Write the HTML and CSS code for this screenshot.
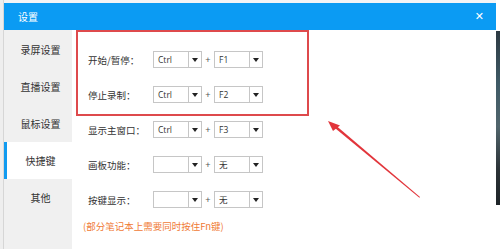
FILE: index.html
```html
<!DOCTYPE html>
<html lang="zh">
<head>
<meta charset="utf-8">
<link rel="stylesheet" href="styles.css">
</head>
<body>
<div class="desk">
  <div class="edge-left"></div>
  <div class="dialog">
    <div class="titlebar">
      <span class="title">设置</span>
      <span class="close">✕</span>
    </div>
    <div class="dlg-body">
      <nav class="sidebar">
        <div class="nav-item">录屏设置</div>
        <div class="nav-item">直播设置</div>
        <div class="nav-item">鼠标设置</div>
        <div class="nav-item active">快捷键</div>
        <div class="nav-item">其他</div>
      </nav>
      <main class="content">
        <div class="row">
          <span class="label">开始/暂停：</span>
          <div class="select"><span class="val">Ctrl</span><span class="drop"></span></div>
          <span class="plus">+</span>
          <div class="select"><span class="val">F1</span><span class="drop"></span></div>
        </div>
        <div class="row">
          <span class="label">停止录制：</span>
          <div class="select"><span class="val">Ctrl</span><span class="drop"></span></div>
          <span class="plus">+</span>
          <div class="select"><span class="val">F2</span><span class="drop"></span></div>
        </div>
        <div class="row">
          <span class="label">显示主窗口：</span>
          <div class="select"><span class="val">Ctrl</span><span class="drop"></span></div>
          <span class="plus">+</span>
          <div class="select"><span class="val">F3</span><span class="drop"></span></div>
        </div>
        <div class="row">
          <span class="label">画板功能：</span>
          <div class="select"><span class="val"></span><span class="drop"></span></div>
          <span class="plus">+</span>
          <div class="select"><span class="val cjk">无</span><span class="drop"></span></div>
        </div>
        <div class="row">
          <span class="label">按键显示：</span>
          <div class="select"><span class="val"></span><span class="drop"></span></div>
          <span class="plus">+</span>
          <div class="select"><span class="val cjk">无</span><span class="drop"></span></div>
        </div>
        <p class="note">(部分笔记本上需要同时按住Fn键)</p>
      </main>
    </div>
  </div>
  <div class="edge-right"><div class="photo"></div></div>
</div>
<div class="highlight"></div>
<svg class="arrow" width="500" height="249" viewBox="0 0 500 249">
  <polygon points="420,197 419.4,197.8 334,127.2 335.6,125.2" fill="#e2353b"/>
  <polygon points="328,121 340,125.5 333,131" fill="#e2353b"/>
</svg>
</body>
</html>
```
FILE: styles.css
```css
* { box-sizing: border-box; }
html, body { margin: 0; padding: 0; }
body {
  width: 500px;
  height: 249px;
  overflow: hidden;
  background: #f3f4f6;
  font-family: "Noto Sans CJK SC", "Noto Sans", sans-serif;
  color: #333;
  position: relative;
}
.desk {
  display: flex;
  height: 249px;
}
.edge-left {
  width: 4px;
  background: #eeeeee;
  border-right: 1px solid #d6d6d6;
}
.edge-right {
  width: 4px;
  background: #ffffff;
  padding-top: 31px;
}
.photo {
  height: 174px;
  background: linear-gradient(180deg, #2d3a42 0%, #3f5a66 30%, #51656c 55%, #2b3236 80%, #1e2428 100%);
}
.dialog {
  flex: 1;
  margin-top: 3px;
  display: flex;
  flex-direction: column;
  background: #fff;
}
.titlebar {
  height: 27px;
  background: #0b9bf3;
  display: flex;
  align-items: center;
  justify-content: space-between;
  padding: 0 12px 0 14px;
  color: #fff;
}
.title { font-size: 10px; }
.close { font-size: 11px; font-family: "DejaVu Sans", sans-serif; font-weight: bold; }
.dlg-body {
  flex: 1;
  display: flex;
}
.sidebar {
  width: 68px;
  background: #f0f0f0;
  padding-top: 1px;
}
.nav-item {
  height: 37px;
  display: flex;
  align-items: center;
  justify-content: center;
  padding-left: 5px;
  font-size: 10px;
  color: #333;
}
.nav-item.active {
  background: #fff;
  border-left: 3px solid #119bf0;
  padding-left: 2px;
}
.content {
  flex: 1;
  padding: 21px 0 0 16px;
  display: flex;
  flex-direction: column;
  gap: 18px;
}
.row {
  display: flex;
  align-items: center;
  height: 17px;
}
.label {
  width: 65px;
  font-size: 9.5px;
  color: #333;
}
.select {
  width: 49px;
  height: 17px;
  border: 1px solid #c6c6c6;
  display: flex;
  background: #fff;
}
.val {
  flex: 1;
  font-family: "Open Sans", "Liberation Sans", sans-serif;
  font-size: 8.5px;
  line-height: 15px;
  padding-left: 4px;
  color: #333;
}
.val.cjk { font-family: "Noto Sans CJK SC", sans-serif; }
.drop {
  width: 13px;
  border-left: 1px solid #c6c6c6;
  display: flex;
  align-items: center;
  justify-content: center;
}
.drop::after {
  content: "";
  border-left: 3.5px solid transparent;
  border-right: 3.5px solid transparent;
  border-top: 4px solid #222;
}
.plus {
  width: 12px;
  text-align: center;
  font-size: 9px;
  font-family: "Liberation Sans", sans-serif;
  color: #555;
}
.note {
  margin: -7px 0 0 -5px;
  font-size: 9.5px;
  color: #f07a35;
}
.highlight {
  position: absolute;
  left: 76px;
  top: 30px;
  width: 233px;
  height: 86px;
  border: 2px solid #de4a4c;
}
.arrow {
  position: absolute;
  left: 0;
  top: 0;
}
```
